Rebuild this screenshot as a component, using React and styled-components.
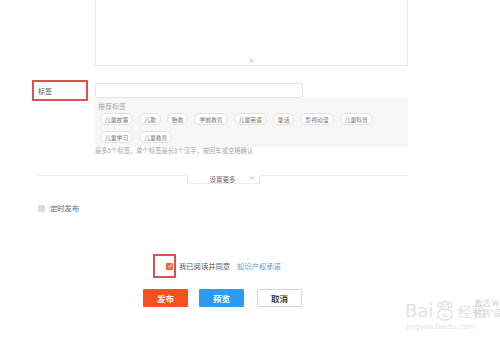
import React from 'react';
import styled, { createGlobalStyle } from 'styled-components';

const GlobalStyle = createGlobalStyle`
  html, body {
    margin: 0;
    padding: 0;
    background: #fff;
  }
  body {
    width: 500px;
    height: 342px;
    overflow: hidden;
    font-family: "Noto Sans CJK SC", "Noto Sans", sans-serif;
    color: #555;
  }
`;

const Page = styled.div`
  position: relative;
  width: 500px;
  height: 342px;
  overflow: hidden;
`;

const Form = styled.div`
  display: flex;
  flex-direction: column;
  padding: 0 92px 0 38px;
`;

const Editor = styled.div`
  display: flex;
  flex-direction: column;
  justify-content: flex-end;
  align-items: center;
  margin-left: 57px;
  height: 65px;
  border: 1px solid #e6e6e6;
  border-top: none;
`;

const ResizeMark = styled.span`
  font-size: 9px;
  line-height: 8px;
  color: #b8b8b8;
`;

const TagRow = styled.div`
  display: flex;
  align-items: flex-start;
  gap: 7px;
  margin: 14px 0 0 -6px;
`;

const FieldLabel = styled.div`
  box-sizing: border-box;
  width: 56px;
  height: 21px;
  border: 2px solid #d9534f;
  display: flex;
  align-items: center;
  padding-left: 4px;
  font-size: 7px;
  color: #555;
`;

const TagColumn = styled.div`
  display: flex;
  flex-direction: column;
  width: 313px;
  padding-top: 3px;
`;

const TagInput = styled.div`
  box-sizing: border-box;
  width: 208px;
  height: 15px;
  border: 1px solid #e3e3e3;
  border-radius: 2px;
`;

const SuggestPanel = styled.div`
  display: flex;
  flex-direction: column;
  background: #f7f7f7;
  padding: 4px 6px 4px 5px;
`;

const SuggestTitle = styled.div`
  font-size: 7px;
  line-height: 8px;
  color: #aaa;
  margin-left: -2px;
`;

const TagList = styled.div`
  display: flex;
  flex-wrap: wrap;
  column-gap: 6px;
  row-gap: 6px;
  margin-top: 3px;
`;

const Tag = styled.span`
  box-sizing: border-box;
  height: 12px;
  padding: 0 4px;
  display: flex;
  align-items: center;
  border: 1px solid #e2e2e2;
  border-radius: 6px;
  background: #fff;
  font-size: 5.8px;
  color: #777;
`;

const Hint = styled.div`
  font-size: 6.3px;
  line-height: 8px;
  color: #a6a6a6;
`;

const Divider = styled.div`
  display: flex;
  align-items: flex-start;
  margin-top: 20px;
`;

const DividerLine = styled.div`
  flex: 1;
  border-top: 1px solid #ececec;
`;

const MoreTab = styled.div`
  box-sizing: border-box;
  width: 73px;
  height: 8px;
  border: 1px solid #ececec;
  border-top: none;
  display: flex;
  justify-content: flex-end;
  align-items: flex-start;
  gap: 14px;
  padding-right: 4px;
  margin-top: 1px;
`;

const MoreText = styled.span`
  font-size: 6.5px;
  line-height: 6px;
  color: #666;
`;

const CheckRow = styled.label`
  display: flex;
  align-items: center;
  gap: 5px;
  margin-top: 19px;
  font-size: 7.3px;
  color: #666;
`;

const Box = styled.span`
  width: 7px;
  height: 7px;
  display: flex;
  align-items: center;
  justify-content: center;
  background: ${p => (p.$checked ? '#ee6a42' : '#dcdcdc')};
  border-radius: 1px;
`;

const AgreeRow = styled.div`
  display: flex;
  align-items: center;
  margin: 41px 0 0 115px;
  font-size: 7.3px;
  color: #555;
`;

const Highlight = styled.div`
  box-sizing: border-box;
  width: 23px;
  height: 24px;
  border: 2px solid #d9534f;
  display: flex;
  align-items: center;
  justify-content: flex-end;
  padding-right: 1px;
  margin-right: 3px;
`;

const AgreeLink = styled.span`
  color: #5b9bd1;
  margin-left: 7px;
`;

const Buttons = styled.div`
  display: flex;
  gap: 11px;
  margin: 11px 0 0 105px;
`;

const Button = styled.div`
  box-sizing: border-box;
  width: 45px;
  height: 18px;
  display: flex;
  align-items: center;
  justify-content: center;
  font-size: 8.5px;
  font-weight: 700;
  border-radius: 1px;
  background: ${p => p.$bg || '#fff'};
  color: ${p => (p.$bg ? '#fff' : '#444')};
  border: 1px solid ${p => p.$border || p.$bg};
`;

const Watermark = styled.div`
  position: absolute;
  left: 405px;
  top: 300px;
  display: flex;
  flex-direction: column;
  color: #e2e2e2;
`;

const LogoLine = styled.div`
  display: flex;
  align-items: center;
  gap: 1px;
`;

const LogoBig = styled.span`
  font-family: "DejaVu Sans", sans-serif;
  font-size: 18px;
  line-height: 20px;
`;

const LogoCn = styled.span`
  font-size: 14px;
  line-height: 18px;
`;

const LogoSmall = styled.span`
  font-family: "DejaVu Sans", sans-serif;
  font-size: 7.5px;
  line-height: 9px;
  margin-left: 1px;
`;

const Activate = styled.div`
  position: absolute;
  left: 474px;
  top: 298px;
  display: flex;
  flex-direction: column;
  font-size: 8px;
  line-height: 10px;
  color: #cfcfcf;
  white-space: nowrap;
`;

const tags = ['儿童故事', '儿歌', '胎教', '学前教育', '儿童英语', '童话', '影视动漫', '儿童科普', '儿童学习', '儿童教育'];

const Check = () => (
  <svg width="6" height="6" viewBox="0 0 10 10">
    <path d="M2 5.2 L4.2 7.4 L8.2 2.8" fill="none" stroke="#fff" strokeWidth="1.6" />
  </svg>
);

const Paw = () => (
  <svg width="22" height="22" viewBox="0 0 22 22">
    <g fill="none" stroke="#e0e0e0" strokeWidth="1.3">
      <ellipse cx="6" cy="5" rx="2" ry="2.6" />
      <ellipse cx="11" cy="3.5" rx="2" ry="2.6" />
      <ellipse cx="16" cy="5" rx="2" ry="2.6" />
      <path d="M4 14 Q4 9 11 9 Q18 9 18 14 Q18 20 11 20 Q4 20 4 14 Z" />
    </g>
    <text x="11" y="17" textAnchor="middle" fontSize="6" fill="#d8d8d8" fontFamily="DejaVu Sans">du</text>
  </svg>
);

export default function App() {
  return (
    <Page>
      <GlobalStyle />
      <Form>
        <Editor>
          <ResizeMark>+</ResizeMark>
        </Editor>

        <TagRow>
          <FieldLabel>标签</FieldLabel>
          <TagColumn>
            <TagInput />
            <SuggestPanel>
              <SuggestTitle>推荐标签</SuggestTitle>
              <TagList>
                {tags.map(t => (
                  <Tag key={t}>{t}</Tag>
                ))}
              </TagList>
            </SuggestPanel>
            <Hint>最多5个标签，单个标签最长8个汉字，按回车或空格确认</Hint>
          </TagColumn>
        </TagRow>

        <Divider>
          <DividerLine />
          <MoreTab>
            <MoreText>设置更多</MoreText>
            <svg width="5" height="4" viewBox="0 0 10 8">
              <path d="M1 1 L5 6 L9 1" fill="none" stroke="#999" strokeWidth="1.4" />
            </svg>
          </MoreTab>
          <DividerLine />
        </Divider>

        <CheckRow>
          <Box />
          定时发布
        </CheckRow>

        <AgreeRow>
          <Highlight>
            <Box $checked>
              <Check />
            </Box>
          </Highlight>
          我已阅读并同意
          <AgreeLink>知识产权承诺</AgreeLink>
        </AgreeRow>

        <Buttons>
          <Button $bg="#f4511e">发布</Button>
          <Button $bg="#2d9bf0">预览</Button>
          <Button $border="#d6d6d6" style={{ marginLeft: 2 }}>取消</Button>
        </Buttons>
      </Form>

      <Watermark>
        <LogoLine>
          <LogoBig>Bai</LogoBig>
          <Paw />
          <LogoCn>经验</LogoCn>
        </LogoLine>
        <LogoSmall>jingyan.baidu.com</LogoSmall>
      </Watermark>
      <Activate>
        <span>激活 W</span>
        <span>转到"设置</span>
      </Activate>
    </Page>
  );
}
